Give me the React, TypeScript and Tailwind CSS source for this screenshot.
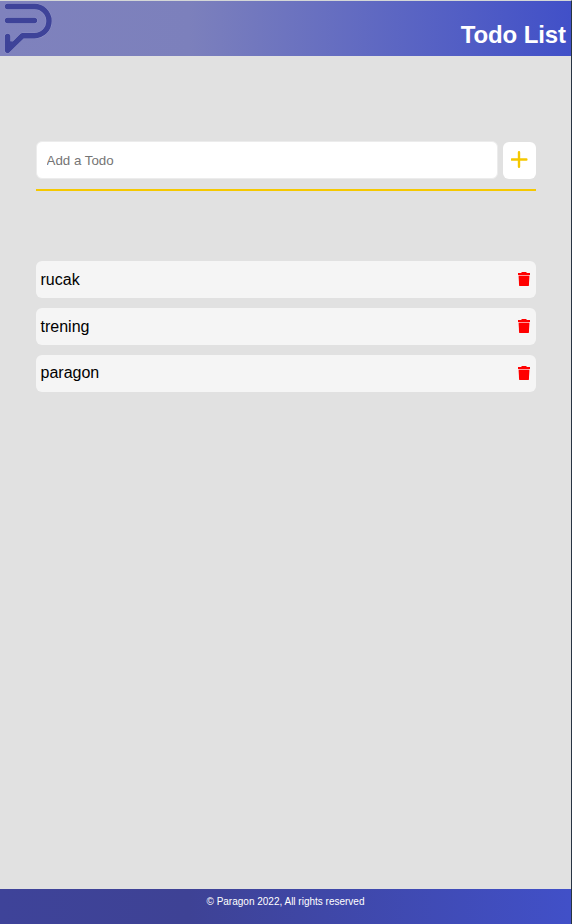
import React from "react";

const todos = ["rucak", "trening", "paragon"];

const logoPath = "M7.5 6.5H34.4A14.6 14.6 0 0 1 34.4 35.7H22.4L7.6 50.4V36.5M7.5 20.5H34.4";

function Logo() {
  return (
    <svg width="56" height="55" viewBox="0 1 56 55" fill="none" strokeLinecap="round" strokeLinejoin="round" className="shrink-0">
      <path d={logoPath} stroke="#b4b6dc" strokeOpacity="0.6" strokeWidth="6.1" />
      <path d={logoPath} stroke="#3e4399" strokeWidth="5.5" />
      <path d="M7.6 50.4V41L16 42Z" fill="#3e4399" />
    </svg>
  );
}

function TrashIcon() {
  return (
    <svg width="12" height="14" viewBox="0 0 12 14" className="-mt-[2px] shrink-0">
      <path d="M4 0H8L9 1H12V3H0V1H3Z" fill="#ff0000" />
      <path d="M0.5 3H11.5V4H0.5Z" fill="#ff9a9a" />
      <path d="M0.6 4H11.4L10.9 13.5Q10.8 14 10.3 14H1.7Q1.2 14 1.1 13.5Z" fill="#ff0000" />
    </svg>
  );
}

export default function App() {
  return (
    <div
      className="flex h-[924px] w-[572px] flex-col border-r border-t border-r-[#283442] border-t-[#d4d7d7] bg-[#e1e1e1] text-black"
      style={{ fontFamily: '"Liberation Sans", Arial, sans-serif' }}
    >
      <header className="flex h-[55px] shrink-0 justify-between bg-[linear-gradient(to_right,#7f82bd_0%,#7c80bc_33%,#4150c8_100%)]">
        <Logo />
        <h1 className="mr-[5px] mt-[20px] text-[24px] font-bold leading-[28px] tracking-[-0.1px] text-white">Todo List</h1>
      </header>
      <main className="flex-1 px-[36px] pt-[85px] pr-[35px]">
        <form className="flex h-[50px] items-start justify-between border-b-2 border-[#f5c800]" onSubmit={(e) => e.preventDefault()}>
          <input
            type="text"
            placeholder="Add a Todo"
            className="h-[38px] w-[462px] rounded-[6px] border border-[#ececec] bg-white pl-[9.5px] text-[13.333px] outline-none placeholder:text-[#757575]"
          />
          <button type="button" aria-label="Add" className="mt-px flex h-[37px] w-[33px] items-center justify-center rounded-[6px] bg-white">
            <svg width="17" height="17" viewBox="0 0 17 17" className="-mt-[2px] mr-px">
              <path d="M8 1.2V15.8M0.9 8.5H15.4" stroke="#f5c800" strokeWidth="2.4" strokeLinecap="round" />
            </svg>
          </button>
        </form>
        <ul className="mt-[70px] flex flex-col gap-[10px]">
          {todos.map((todo) => (
            <li key={todo} className="flex h-[37px] items-center justify-between rounded-[6px] bg-[#f5f5f5] pl-[4.5px] pr-[6px] last:[&>span]:pb-[2px]">
              <span className="text-[16px] leading-[18px]">{todo}</span>
              <TrashIcon />
            </li>
          ))}
        </ul>
      </main>
      <footer className="h-[35px] shrink-0 bg-[linear-gradient(to_right,#3e4399_0%,#3e4295_33%,#4150c8_100%)] pt-[7px] text-center text-[10px] leading-[12px] text-white">
        © Paragon 2022, All rights reserved
      </footer>
    </div>
  );
}
